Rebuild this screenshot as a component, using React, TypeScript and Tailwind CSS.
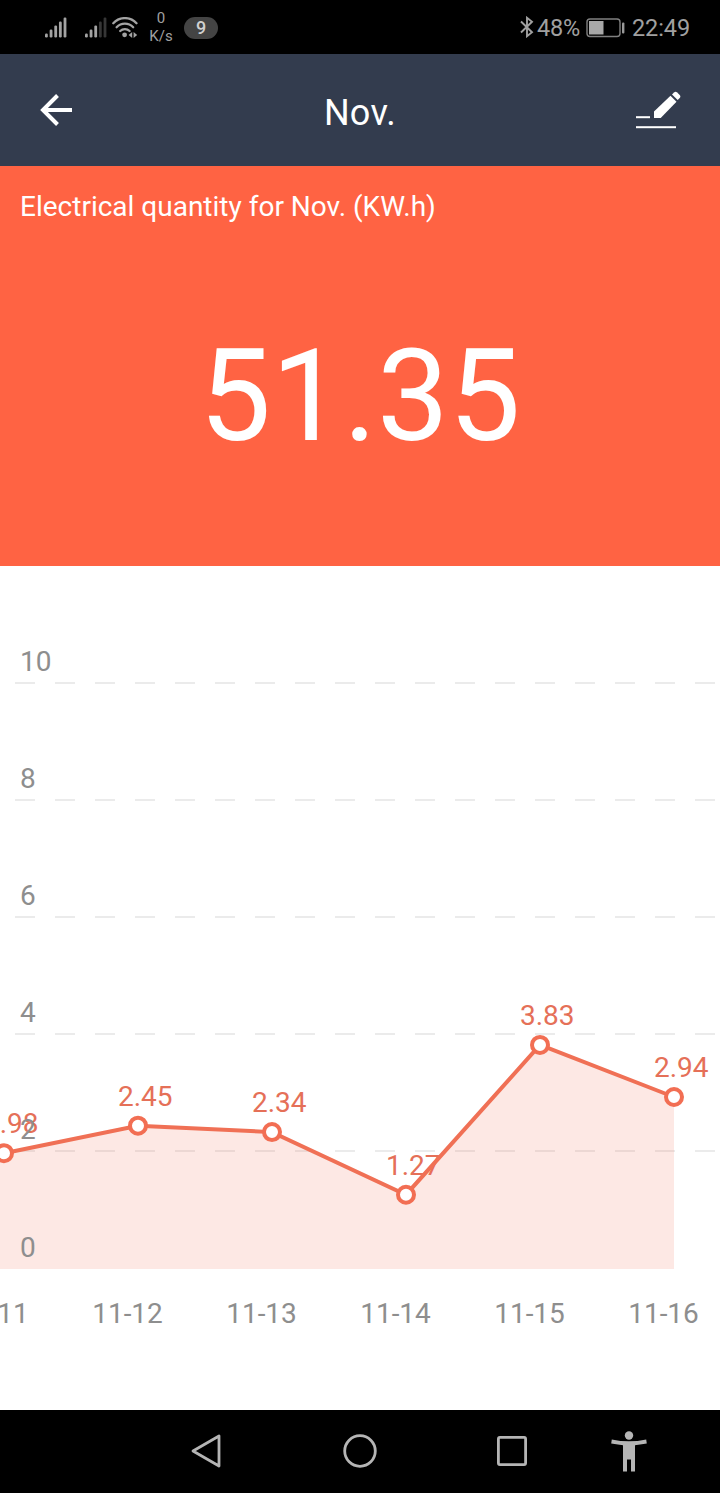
import React from "react";

interface Reading {
  day: string;
  value: number;
}

const READINGS: Reading[] = [
  { day: "11-11", value: 1.98 },
  { day: "11-12", value: 2.45 },
  { day: "11-13", value: 2.34 },
  { day: "11-14", value: 1.27 },
  { day: "11-15", value: 3.83 },
  { day: "11-16", value: 2.94 },
];

const TICKS = [10, 8, 6, 4, 2, 0];

// Chart geometry
const BASELINE = 703;
const UNIT = 58.5;
const FIRST_X = 4;
const STEP = 134;

function SignalIcon({ strength }: { strength: number }) {
  const bars = [4, 8, 12, 16, 20];
  return (
    <svg width="22" height="21" viewBox="0 0 22 21" className="shrink-0">
      {bars.map((h, i) => (
        <rect
          key={h}
          x={i * 4.65}
          y={20.5 - h}
          width="2.8"
          height={h}
          rx="1.2"
          className={i < strength ? "fill-[#a3a3a3]" : "fill-[#363636]"}
        />
      ))}
    </svg>
  );
}

function StatusBar() {
  return (
    <div className="flex h-[54px] items-center justify-between bg-black pl-[45px] pr-[30px] text-[#a0a0a0]">
      <div className="flex items-center">
        <SignalIcon strength={5} />
        <div className="w-[18px]" />
        <SignalIcon strength={3} />
        <svg width="26" height="21" viewBox="0 0 26 21" fill="none" className="ml-[5px]">
          <g stroke="#a3a3a3" strokeWidth="2.3" strokeLinecap="round">
            <path d="M1.3 6.2C7.5-.6 18.3-.6 24.5 6.2" />
            <path d="M4.6 10.2c4.6-4.8 12-4.8 16.6 0" />
            <path d="M8.2 14c2.6-2.5 6.8-2.5 9.4 0" />
          </g>
          <circle cx="12.6" cy="17.8" r="2.4" fill="#a3a3a3" />
          <path d="M20.2 15v6l-3.6-3zM21.6 15v6l3.6-3z" fill="#a3a3a3" />
        </svg>
        <div className="ml-[11px] mt-[-1px] w-[24px] text-center text-[15px] leading-[18px]">
          <div>0</div>
          <div>K/s</div>
        </div>
        <div className="ml-[11px] mt-px flex h-[22px] w-[34px] items-center justify-center rounded-full bg-[#444] text-[18px] font-medium leading-none text-[#d0d0d0]">
          9
        </div>
      </div>
      <div className="flex items-center text-[23.5px] leading-none">
        <svg width="14" height="22" viewBox="0 0 14 22" fill="none" stroke="#a0a0a0" strokeWidth="1.9">
          <path d="M1 5.5l11 10.7L7 20.2V1.8l5 4L1 16.5" />
        </svg>
        <span className="ml-[3px] mt-[3px] tracking-[-0.2px]">48%</span>
        <svg width="39" height="20" viewBox="0 0 39 20" fill="none" className="ml-[6px] mr-[7px] mt-px">
          <rect x="1" y="1" width="33" height="17.5" rx="3" stroke="#808080" strokeWidth="1.4" />
          <rect x="3" y="3" width="14.5" height="13.5" fill="#a8a8a8" />
          <rect x="36" y="4.5" width="2.4" height="11" rx="1" fill="#999" />
        </svg>
        <span className="mt-[3px] tracking-[-0.1px]">22:49</span>
      </div>
    </div>
  );
}

function TitleBar() {
  return (
    <header className="flex h-[112px] items-center justify-between bg-[#333c4e] px-10 text-white">
      <button type="button" aria-label="Back" className="w-11">
        <svg width="33" height="34" viewBox="0 0 33 34" fill="none" stroke="white" strokeWidth="4">
          <path d="M17.5 2.5L3 17l14.5 14.5M2 17h30" />
        </svg>
      </button>
      <h1 className="mt-1.5 text-[36px] leading-none tracking-[0.3px]">Nov.</h1>
      <button type="button" aria-label="Edit" className="w-11">
        <svg width="45" height="38" viewBox="0 0 45 38" fill="white">
          <path d="M18 27v-6.5L34.5 4.8l6 6L24.7 27z" />
          <path d="M36 3.5l2-2q1.6-1.4 3.2 0l2.5 2.5q1.4 1.6 0 3.1l-2 2z" />
          <rect y="25.2" width="14" height="2" />
          <rect y="35.2" width="40" height="2" />
        </svg>
      </button>
    </header>
  );
}

function UsageChart() {
  const points = READINGS.map((r, i) => ({
    ...r,
    x: FIRST_X + i * STEP,
    y: BASELINE - r.value * UNIT,
  }));
  const line = points.map((p) => `${p.x},${p.y}`).join(" ");
  const lastX = points[points.length - 1].x;

  return (
    <svg width="720" height="844" viewBox="0 0 720 844" className="block bg-white text-[28px]">
      {/* Grid */}
      {TICKS.filter((t) => t > 0).map((t) => (
        <line
          key={t}
          x1="15"
          x2="720"
          y1={702 - t * UNIT}
          y2={702 - t * UNIT}
          stroke="#ebebeb"
          strokeWidth="2"
          strokeDasharray="20 20"
        />
      ))}

      {/* Values */}
      {points.map((p) => (
        <text key={p.day} x={p.x - 20} y={p.y - 20} fill="#e57058">
          {p.value}
        </text>
      ))}

      {/* Area and line */}
      <polygon
        points={`${FIRST_X - STEP},${BASELINE - 80} ${line} ${lastX},${BASELINE} ${FIRST_X - STEP},${BASELINE}`}
        fill="#f26f5a"
        fillOpacity="0.16"
      />
      <polyline points={line} fill="none" stroke="#f07055" strokeWidth="4" />
      {points.map((p) => (
        <circle key={p.day} cx={p.x} cy={p.y} r="8" fill="white" stroke="#f26e53" strokeWidth="4" />
      ))}

      {/* Axis labels */}
      {TICKS.map((t) => (
        <text key={t} x="20" y={(t === 0 ? 691 : 690) - t * UNIT} fill="#8e8e8e">
          {t}
        </text>
      ))}
      {points.map((p) => (
        <text key={p.day} x={p.x - 10.5} y="757" textAnchor="middle" fill="#8e8e8e">
          {p.day}
        </text>
      ))}
    </svg>
  );
}

function NavBar() {
  return (
    <nav className="flex h-[83px] items-center bg-black pb-px">
      <svg width="30" height="36" viewBox="0 0 30 36" fill="none" className="ml-[191px]">
        <path d="M28 3v30L2 18z" stroke="#b5b5b5" strokeWidth="2.8" strokeLinejoin="round" />
      </svg>
      <svg width="36" height="36" viewBox="0 0 36 36" fill="none" className="ml-[121px]">
        <circle cx="18" cy="18" r="15.3" stroke="#b5b5b5" strokeWidth="2.8" />
      </svg>
      <svg width="30" height="30" viewBox="0 0 30 30" fill="none" className="ml-[119px]">
        <rect x="1.4" y="1.4" width="27.2" height="27.2" rx="1.5" stroke="#b5b5b5" strokeWidth="2.8" />
      </svg>
      <svg width="36" height="41" viewBox="0 0 36 41" fill="#b5b5b5" className="ml-[84px]">
        <circle cx="18" cy="4.5" r="4.2" />
        <path d="M.8 8.5Q18 12.2 35.2 8.5l.6 4L24 14.2V40.5h-4V28.5h-4v12h-4V14.2L.2 12.5z" />
      </svg>
    </nav>
  );
}

export default function App() {
  return (
    <div className="h-[1493px] w-[720px] overflow-hidden bg-white font-[Roboto,sans-serif]">
      <StatusBar />
      <TitleBar />
      <section className="flex h-[400px] flex-col bg-[#ff6343] text-white">
        <p className="px-5 pt-[23px] text-[28px] leading-9">Electrical quantity for Nov. (KW.h)</p>
        <p className="pt-[107px] text-center text-[128px] leading-[128px]">51.35</p>
      </section>
      <UsageChart />
      <NavBar />
    </div>
  );
}
